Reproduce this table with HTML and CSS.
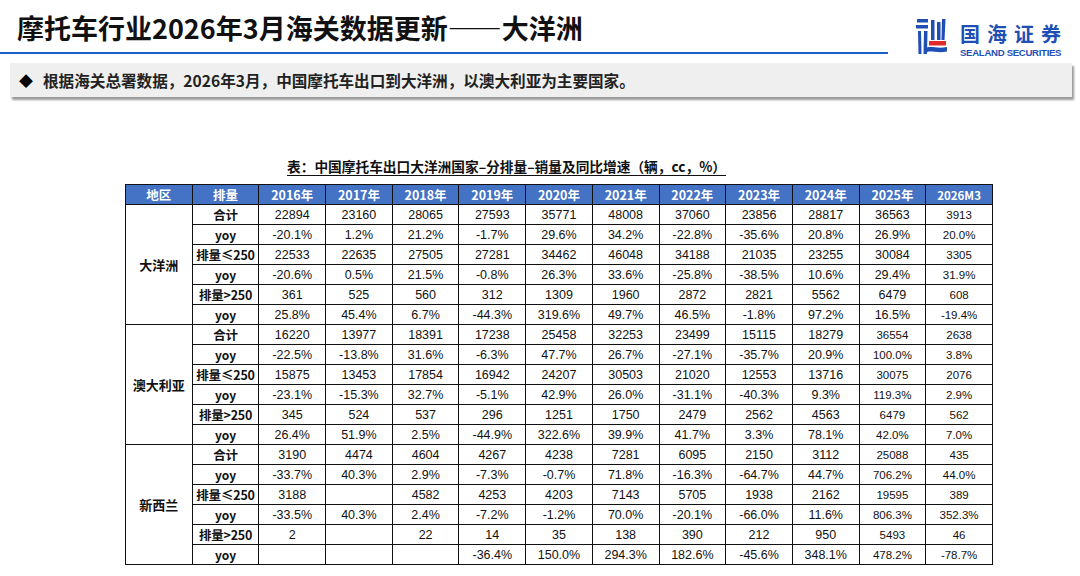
FILE: index.html
```html
<!DOCTYPE html>
<html lang="zh-CN">
<head>
<meta charset="utf-8">
<title>摩托车行业2026年3月海关数据更新——大洋洲</title>
<link rel="stylesheet" href="styles.css">
</head>
<body>
<div class="page">
  <header class="top">
    <div class="title-wrap">
      <h1 class="title">摩托车行业2026年3月海关数据更新——大洋洲</h1>
    </div>
    <div class="logo">
      <svg class="mark" width="32" height="37" viewBox="0 0 32 37">
        <rect x="1" y="0" width="11" height="3.5" fill="#1f4fb4"/>
        <rect x="0" y="6" width="12" height="3.5" fill="#1f4fb4"/>
        <path d="M2 12 L5 12 L5.5 35 L2.5 35 Z" fill="#1f4fb4"/>
        <path d="M8 12 L11.5 12 L11 35 L7.5 35 Z" fill="#1f4fb4"/>
        <path d="M15 1 L18.5 1 L18.5 21 L15 21 Z" fill="#1f4fb4"/>
        <path d="M21 3 L24.5 3 L24.5 21 L21 21 Z" fill="#1f4fb4"/>
        <path d="M26 0 L29.5 0 L28.5 21 L25.5 21 Z" fill="#1f4fb4"/>
        <path d="M13 22 L30 22 L30 26.5 L13 26.5 Z" fill="#e02b2b"/>
        <path d="M11 28.5 C16 27 22 30 31 28 L31 32.5 C22 34.5 16 31.5 11 33 Z" fill="#1f4fb4"/>
      </svg>
      <div class="logo-text">
        <div class="logo-cn">国海证券</div>
        <div class="logo-en">SEALAND SECURITIES</div>
      </div>
    </div>
  </header>

  <div class="note"><span class="dia">◆</span><span class="note-text">根据海关总署数据，2026年3月，中国摩托车出口到大洋洲，以澳大利亚为主要国家。</span></div>

  <div class="caption">表：中国摩托车出口大洋洲国家–分排量–销量及同比增速（辆，cc，%）</div>

  <table class="data">
    <colgroup>
      <col><col><col><col><col><col><col><col><col><col><col><col><col>
    </colgroup>
    <thead>
      <tr><th>地区</th><th>排量</th><th>2016年</th><th>2017年</th><th>2018年</th><th>2019年</th><th>2020年</th><th>2021年</th><th>2022年</th><th>2023年</th><th>2024年</th><th>2025年</th><th class="m3">2026M3</th></tr>
    </thead>
    <tbody>
      <tr class="grp"><td class="region" rowspan="6">大洋洲</td><td class="lbl">合计</td><td>22894</td><td>23160</td><td>28065</td><td>27593</td><td>35771</td><td>48008</td><td>37060</td><td>23856</td><td>28817</td><td>36563</td><td class="s">3913</td></tr>
      <tr><td class="lbl y">yoy</td><td>-20.1%</td><td>1.2%</td><td>21.2%</td><td>-1.7%</td><td>29.6%</td><td>34.2%</td><td>-22.8%</td><td>-35.6%</td><td>20.8%</td><td>26.9%</td><td class="s">20.0%</td></tr>
      <tr><td class="lbl">排量≤250</td><td>22533</td><td>22635</td><td>27505</td><td>27281</td><td>34462</td><td>46048</td><td>34188</td><td>21035</td><td>23255</td><td>30084</td><td class="s">3305</td></tr>
      <tr><td class="lbl y">yoy</td><td>-20.6%</td><td>0.5%</td><td>21.5%</td><td>-0.8%</td><td>26.3%</td><td>33.6%</td><td>-25.8%</td><td>-38.5%</td><td>10.6%</td><td>29.4%</td><td class="s">31.9%</td></tr>
      <tr><td class="lbl">排量&gt;250</td><td>361</td><td>525</td><td>560</td><td>312</td><td>1309</td><td>1960</td><td>2872</td><td>2821</td><td>5562</td><td>6479</td><td class="s">608</td></tr>
      <tr><td class="lbl y">yoy</td><td>25.8%</td><td>45.4%</td><td>6.7%</td><td>-44.3%</td><td>319.6%</td><td>49.7%</td><td>46.5%</td><td>-1.8%</td><td>97.2%</td><td>16.5%</td><td class="s">-19.4%</td></tr>

      <tr class="grp"><td class="region" rowspan="6">澳大利亚</td><td class="lbl">合计</td><td>16220</td><td>13977</td><td>18391</td><td>17238</td><td>25458</td><td>32253</td><td>23499</td><td>15115</td><td>18279</td><td class="s">36554</td><td class="s">2638</td></tr>
      <tr><td class="lbl y">yoy</td><td>-22.5%</td><td>-13.8%</td><td>31.6%</td><td>-6.3%</td><td>47.7%</td><td>26.7%</td><td>-27.1%</td><td>-35.7%</td><td>20.9%</td><td class="s">100.0%</td><td class="s">3.8%</td></tr>
      <tr><td class="lbl">排量≤250</td><td>15875</td><td>13453</td><td>17854</td><td>16942</td><td>24207</td><td>30503</td><td>21020</td><td>12553</td><td>13716</td><td class="s">30075</td><td class="s">2076</td></tr>
      <tr><td class="lbl y">yoy</td><td>-23.1%</td><td>-15.3%</td><td>32.7%</td><td>-5.1%</td><td>42.9%</td><td>26.0%</td><td>-31.1%</td><td>-40.3%</td><td>9.3%</td><td class="s">119.3%</td><td class="s">2.9%</td></tr>
      <tr><td class="lbl">排量&gt;250</td><td>345</td><td>524</td><td>537</td><td>296</td><td>1251</td><td>1750</td><td>2479</td><td>2562</td><td>4563</td><td class="s">6479</td><td class="s">562</td></tr>
      <tr><td class="lbl y">yoy</td><td>26.4%</td><td>51.9%</td><td>2.5%</td><td>-44.9%</td><td>322.6%</td><td>39.9%</td><td>41.7%</td><td>3.3%</td><td>78.1%</td><td class="s">42.0%</td><td class="s">7.0%</td></tr>

      <tr class="grp"><td class="region" rowspan="6">新西兰</td><td class="lbl">合计</td><td>3190</td><td>4474</td><td>4604</td><td>4267</td><td>4238</td><td>7281</td><td>6095</td><td>2150</td><td>3112</td><td class="s">25088</td><td class="s">435</td></tr>
      <tr><td class="lbl y">yoy</td><td>-33.7%</td><td>40.3%</td><td>2.9%</td><td>-7.3%</td><td>-0.7%</td><td>71.8%</td><td>-16.3%</td><td>-64.7%</td><td>44.7%</td><td class="s">706.2%</td><td class="s">44.0%</td></tr>
      <tr><td class="lbl">排量≤250</td><td>3188</td><td></td><td>4582</td><td>4253</td><td>4203</td><td>7143</td><td>5705</td><td>1938</td><td>2162</td><td class="s">19595</td><td class="s">389</td></tr>
      <tr><td class="lbl y">yoy</td><td>-33.5%</td><td>40.3%</td><td>2.4%</td><td>-7.2%</td><td>-1.2%</td><td>70.0%</td><td>-20.1%</td><td>-66.0%</td><td>11.6%</td><td class="s">806.3%</td><td class="s">352.3%</td></tr>
      <tr><td class="lbl">排量&gt;250</td><td>2</td><td></td><td>22</td><td>14</td><td>35</td><td>138</td><td>390</td><td>212</td><td>950</td><td class="s">5493</td><td class="s">46</td></tr>
      <tr><td class="lbl y">yoy</td><td></td><td></td><td></td><td>-36.4%</td><td>150.0%</td><td>294.3%</td><td>182.6%</td><td>-45.6%</td><td>348.1%</td><td class="s">478.2%</td><td class="s">-78.7%</td></tr>
    </tbody>
  </table>
</div>
</body>
</html>
```

FILE: styles.css
```css
html, body {
  margin: 0;
  padding: 0;
  background: #ffffff;
}

.page {
  width: 1080px;
  height: 576px;
  overflow: hidden;
  font-family: "Noto Sans CJK SC", "Liberation Sans", sans-serif;
  color: #111;
}

.top {
  display: flex;
  align-items: flex-start;
  height: 56px;
}

.title-wrap {
  box-sizing: border-box;
  width: 888px;
  height: 54px;
  border-bottom: 2px solid #1a5fc8;
  display: flex;
  align-items: center;
  padding-left: 17px;
  flex-shrink: 0;
}

.title {
  margin: 0;
  font-size: 27px;
  font-weight: 700;
  line-height: 1;
  color: #111;
  padding-top: 2px;
}

.logo {
  display: flex;
  align-items: flex-start;
  margin-left: 28px;
  padding-top: 19px;
}

.mark {
  display: block;
}

.logo-text {
  margin-left: 12px;
  display: flex;
  flex-direction: column;
  align-items: flex-start;
}

.logo-cn {
  font-size: 20px;
  font-weight: 700;
  color: #1f4fb4;
  letter-spacing: 7px;
  line-height: normal;
  white-space: nowrap;
}

.logo-en {
  font-family: "Liberation Sans", sans-serif;
  font-size: 9.6px;
  font-weight: 700;
  color: #1f4fb4;
  letter-spacing: -0.3px;
  line-height: normal;
  margin-top: -1px;
  white-space: nowrap;
}

.note {
  margin: 7px 0 0 10px;
  width: 1062px;
  height: 34px;
  background: #efefef;
  box-shadow: 2px 3px 2px #9a9a9a;
  display: flex;
  align-items: center;
}

.dia {
  font-size: 14px;
  margin-left: 9px;
  width: 24px;
  color: #000;
  line-height: 1;
}

.note-text {
  font-size: 15.6px;
  font-weight: 700;
  color: #222;
}

.caption {
  margin: 60px 0 0 287px;
  font-size: 13.7px;
  font-weight: 700;
  text-decoration: underline;
  text-underline-offset: 3px;
  color: #111;
  line-height: 18px;
}

.data {
  margin: 9px 0 0 125px;
  border-collapse: collapse;
  table-layout: fixed;
  width: 867px;
  font-family: "Liberation Sans", "Noto Sans CJK SC", sans-serif;
}

.data col {
  width: 66.7px;
}

.data th,
.data td {
  border: 1px solid #111;
  height: 19px;
  padding: 0;
  text-align: center;
  vertical-align: middle;
  line-height: 18px;
  white-space: nowrap;
  overflow: hidden;
}

.data th {
  background: #4472c4;
  color: #fff;
  font-family: "Noto Sans CJK SC", sans-serif;
  font-size: 12.5px;
  font-weight: 700;
}

.data th.m3 {
  font-size: 11.5px;
}

.data td {
  font-size: 12.5px;
  color: #111;
}

.data td.s {
  font-size: 11.5px;
}

.data td.lbl {
  font-family: "Noto Sans CJK SC", sans-serif;
  font-weight: 700;
  font-size: 12.5px;
  letter-spacing: -0.2px;
}

.data td.lbl.y {
  font-size: 12px;
  letter-spacing: 0;
}

.data td.region {
  font-family: "Noto Sans CJK SC", sans-serif;
  font-weight: 700;
  font-size: 13px;
}

.data tr.grp td {
  border-top: 1.5px solid #000;
}
```
